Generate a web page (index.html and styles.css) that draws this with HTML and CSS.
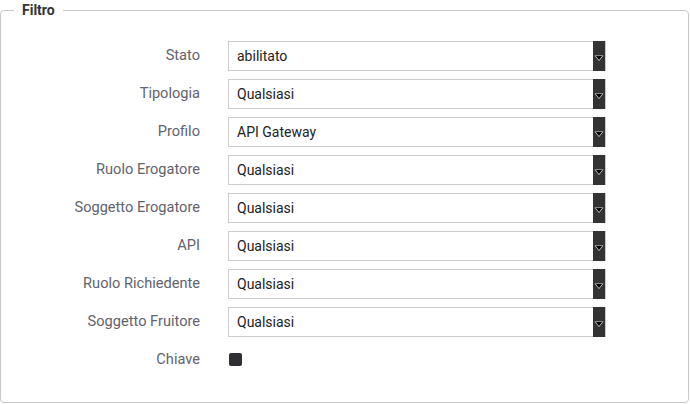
FILE: index.html
```html
<!DOCTYPE html>
<html lang="it">
<head>
<meta charset="utf-8">
<title>Filtro</title>
<link rel="stylesheet" href="styles.css">
</head>
<body>
<fieldset class="filter">
  <legend class="filter-title">Filtro</legend>
  <div class="form">
    <label class="lbl">Stato</label>
    <div class="select"><span class="val">abilitato</span><span class="arrow"><svg width="10" height="7" viewBox="0 0 10 7"><path d="M0.5 0.5 L9.5 0.5 L5 6 Z" fill="#ddd"/><path d="M1.8 1.1 L8.2 1.1 L5 5 Z" fill="#000"/></svg></span></div>
    <label class="lbl">Tipologia</label>
    <div class="select"><span class="val">Qualsiasi</span><span class="arrow"><svg width="10" height="7" viewBox="0 0 10 7"><path d="M0.5 0.5 L9.5 0.5 L5 6 Z" fill="#ddd"/><path d="M1.8 1.1 L8.2 1.1 L5 5 Z" fill="#000"/></svg></span></div>
    <label class="lbl">Profilo</label>
    <div class="select"><span class="val">API Gateway</span><span class="arrow"><svg width="10" height="7" viewBox="0 0 10 7"><path d="M0.5 0.5 L9.5 0.5 L5 6 Z" fill="#ddd"/><path d="M1.8 1.1 L8.2 1.1 L5 5 Z" fill="#000"/></svg></span></div>
    <label class="lbl">Ruolo Erogatore</label>
    <div class="select"><span class="val">Qualsiasi</span><span class="arrow"><svg width="10" height="7" viewBox="0 0 10 7"><path d="M0.5 0.5 L9.5 0.5 L5 6 Z" fill="#ddd"/><path d="M1.8 1.1 L8.2 1.1 L5 5 Z" fill="#000"/></svg></span></div>
    <label class="lbl">Soggetto Erogatore</label>
    <div class="select"><span class="val">Qualsiasi</span><span class="arrow"><svg width="10" height="7" viewBox="0 0 10 7"><path d="M0.5 0.5 L9.5 0.5 L5 6 Z" fill="#ddd"/><path d="M1.8 1.1 L8.2 1.1 L5 5 Z" fill="#000"/></svg></span></div>
    <label class="lbl">API</label>
    <div class="select"><span class="val">Qualsiasi</span><span class="arrow"><svg width="10" height="7" viewBox="0 0 10 7"><path d="M0.5 0.5 L9.5 0.5 L5 6 Z" fill="#ddd"/><path d="M1.8 1.1 L8.2 1.1 L5 5 Z" fill="#000"/></svg></span></div>
    <label class="lbl">Ruolo Richiedente</label>
    <div class="select"><span class="val">Qualsiasi</span><span class="arrow"><svg width="10" height="7" viewBox="0 0 10 7"><path d="M0.5 0.5 L9.5 0.5 L5 6 Z" fill="#ddd"/><path d="M1.8 1.1 L8.2 1.1 L5 5 Z" fill="#000"/></svg></span></div>
    <label class="lbl">Soggetto Fruitore</label>
    <div class="select"><span class="val">Qualsiasi</span><span class="arrow"><svg width="10" height="7" viewBox="0 0 10 7"><path d="M0.5 0.5 L9.5 0.5 L5 6 Z" fill="#ddd"/><path d="M1.8 1.1 L8.2 1.1 L5 5 Z" fill="#000"/></svg></span></div>
    <label class="lbl">Chiave</label>
    <div class="check-cell"><span class="check"></span></div>
  </div>
</fieldset>
</body>
</html>
```
FILE: styles.css
```css
html, body {
  margin: 0;
  padding: 0;
  background: #fff;
}
body {
  font-family: Roboto, "Liberation Sans", sans-serif;
  font-size: 14px;
}
.filter {
  margin: 0 1px 0 0;
  padding: 0;
  border: 1px solid #c8c8c8;
  border-radius: 4px;
  height: 403px;
  box-sizing: border-box;
}
.filter-title {
  margin-left: 13px;
  padding: 0 8px;
  font-weight: bold;
  font-size: 14px;
  line-height: 20px;
  color: #333;
}
.form {
  display: grid;
  grid-template-columns: 199px 378px;
  column-gap: 28px;
  row-gap: 8px;
  grid-auto-rows: 30px;
  padding-top: 21px;
  align-items: center;
}
.lbl {
  text-align: right;
  color: #62636b;
  font-size: 14.6px;
  margin-top: -3px;
}
.select {
  display: flex;
  height: 30px;
  box-sizing: border-box;
  border: 1px solid #cccccc;
  background: #fff;
  align-items: center;
}
.val {
  flex: 1;
  padding-left: 8px;
  color: #222;
  font-size: 14px;
}
.arrow {
  width: 12px;
  align-self: stretch;
  margin: -1px 0;
  background: #333;
  display: flex;
  align-items: center;
  justify-content: center;
}
.arrow svg {
  margin-top: 4px;
}
.check-cell {
  display: flex;
  align-items: center;
}
.check {
  width: 13px;
  height: 13px;
  margin-left: 1px;
  margin-top: -1px;
  background: #2e2e33;
  border-radius: 2px;
}
```
